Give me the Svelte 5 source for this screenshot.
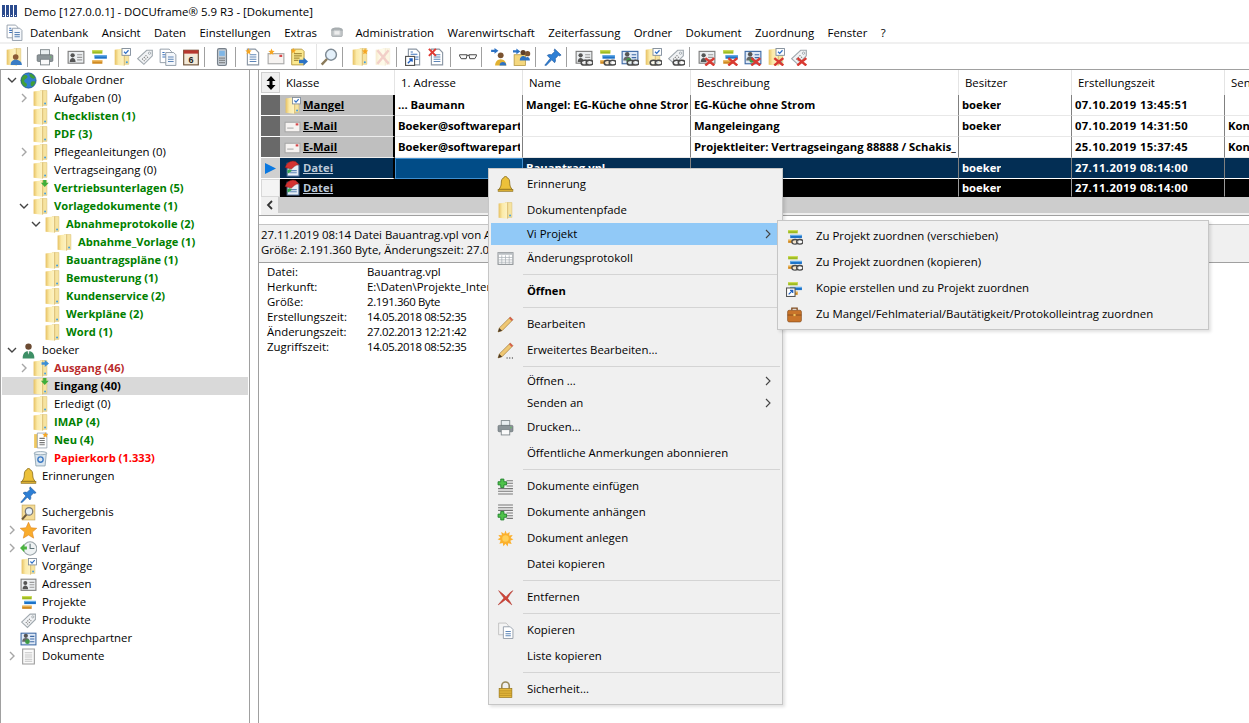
<script lang="ts">
  // Menüleiste
  const menus = [
    { label: 'Datenbank' }, { label: 'Ansicht' }, { label: 'Daten' }, { label: 'Einstellungen' }, { label: 'Extras' },
    { icon: 'fax' }, { label: 'Administration' }, { label: 'Warenwirtschaft' }, { label: 'Zeiterfassung' },
    { label: 'Ordner' }, { label: 'Dokument' }, { label: 'Zuordnung' }, { label: 'Fenster' }, { label: '?' }
  ];

  // Symbolleiste, '|' = Trenner, '||' = neuer Block
  const tools = [
    'userfolder', '|', 'printer', '|', 'idcard', 'project', 'foldercheck', 'tag', 'docs', 'calendar', '|', 'phone', '|',
    'docstar', 'mailstar', 'notearrow', '||', 'magnifier', '|', 'folderstar', 'folderx', '|', 'docshort', 'docx', '|',
    'glasses', '|', 'userarrow', 'usersarrow', '|', 'pin', '|',
    'idcard+link', 'project+link', 'contacts+link', 'foldercheck+link', 'tag+link', '|',
    'idcard+x', 'project+x', 'contacts+x', 'foldercheck+x', 'tag+x'
  ];

  // Baum: level, Icon, Text, Farbe, aufklappbar
  const tree = [
    { l: 0, i: 'globe', t: 'Globale Ordner', c: '', open: true },
    { l: 1, i: 'folder', t: 'Aufgaben (0)', c: '', more: true },
    { l: 1, i: 'folder', t: 'Checklisten (1)', c: 'green' },
    { l: 1, i: 'folder', t: 'PDF (3)', c: 'green' },
    { l: 1, i: 'folder', t: 'Pflegeanleitungen (0)', c: '', more: true },
    { l: 1, i: 'folder', t: 'Vertragseingang (0)', c: '' },
    { l: 1, i: 'folderin', t: 'Vertriebsunterlagen (5)', c: 'green' },
    { l: 1, i: 'folder', t: 'Vorlagedokumente (1)', c: 'green', open: true },
    { l: 2, i: 'folder', t: 'Abnahmeprotokolle (2)', c: 'green', open: true },
    { l: 3, i: 'folder', t: 'Abnahme_Vorlage (1)', c: 'green' },
    { l: 2, i: 'folder', t: 'Bauantragspläne (1)', c: 'green' },
    { l: 2, i: 'folder', t: 'Bemusterung (1)', c: 'green' },
    { l: 2, i: 'folder', t: 'Kundenservice (2)', c: 'green' },
    { l: 2, i: 'folder', t: 'Werkpläne (2)', c: 'green' },
    { l: 2, i: 'folder', t: 'Word (1)', c: 'green' },
    { l: 0, i: 'user', t: 'boeker', c: '', open: true },
    { l: 1, i: 'folderout', t: 'Ausgang (46)', c: 'darkred', more: true },
    { l: 1, i: 'folderin', t: 'Eingang (40)', c: 'strong', sel: true },
    { l: 1, i: 'folder', t: 'Erledigt (0)', c: '' },
    { l: 1, i: 'folder', t: 'IMAP (4)', c: 'green' },
    { l: 1, i: 'foldernew', t: 'Neu (4)', c: 'green' },
    { l: 1, i: 'trash', t: 'Papierkorb (1.333)', c: 'red' },
    { l: 0, i: 'bell', t: 'Erinnerungen', c: '' },
    { l: 0, i: 'pin', t: '', c: '' },
    { l: 0, i: 'searchfolder', t: 'Suchergebnis', c: '' },
    { l: 0, i: 'star', t: 'Favoriten', c: '', more: true },
    { l: 0, i: 'clock', t: 'Verlauf', c: '', more: true },
    { l: 0, i: 'foldercheck', t: 'Vorgänge', c: '' },
    { l: 0, i: 'idcard', t: 'Adressen', c: '' },
    { l: 0, i: 'project', t: 'Projekte', c: '' },
    { l: 0, i: 'tag', t: 'Produkte', c: '' },
    { l: 0, i: 'contacts', t: 'Ansprechpartner', c: '' },
    { l: 0, i: 'page', t: 'Dokumente', c: '', more: true }
  ];

  const columns = [
    { name: '1. Adresse', w: 128 },
    { name: 'Name', w: 168 },
    { name: 'Beschreibung', w: 268 },
    { name: 'Besitzer', w: 113 },
    { name: 'Erstellungszeit', w: 153 },
    { name: 'Sender', w: 40 }
  ];
  const DATE_COL = 4;

  const rows = [
    { kind: 'plain', icon: 'foldercheck', klasse: 'Mangel', cells: ['... Baumann', 'Mangel: EG-Küche ohne Strom', 'EG-Küche ohne Strom', 'boeker', '07.10.2019 13:45:51', ''] },
    { kind: 'plain', icon: 'mail', klasse: 'E-Mail', cells: ['Boeker@softwarepartner.de', '', 'Mangeleingang', 'boeker', '07.10.2019 14:31:50', 'Kontakt'] },
    { kind: 'plain', icon: 'mail', klasse: 'E-Mail', cells: ['Boeker@softwarepartner.de', '', 'Projektleiter: Vertragseingang 88888 / Schakis_', '', '25.10.2019 15:37:45', 'Kontakt'] },
    { kind: 'current', icon: 'datei', klasse: 'Datei', cells: ['', 'Bauantrag.vpl', '', 'boeker', '27.11.2019 08:14:00', ''] },
    { kind: 'marked', icon: 'datei', klasse: 'Datei', cells: ['', '', '', 'boeker', '27.11.2019 08:14:00', ''] }
  ];

  const details = [
    ['Datei:', 'Bauantrag.vpl'],
    ['Herkunft:', 'E:\\Daten\\Projekte_Intern\\Bauantrag'],
    ['Größe:', '2.191.360 Byte'],
    ['Erstellungszeit:', '14.05.2018 08:52:35'],
    ['Änderungszeit:', '27.02.2013 12:21:42'],
    ['Zugriffszeit:', '14.05.2018 08:52:35']
  ];

  // Kontextmenü, tall = 26px Zeile, sonst 22px
  const contextMenu = [
    { t: 'Erinnerung', i: 'bell', tall: true },
    { t: 'Dokumentenpfade', i: 'folder', tall: true },
    { t: 'Vi Projekt', sub: true, hot: true },
    { t: 'Änderungsprotokoll', i: 'table', tall: true },
    { sep: true },
    { t: 'Öffnen', tall: true, bold: true },
    { sep: true },
    { t: 'Bearbeiten', i: 'pencil', tall: true },
    { t: 'Erweitertes Bearbeiten...', i: 'pencildots', tall: true },
    { sep: true },
    { t: 'Öffnen ...', sub: true },
    { t: 'Senden an', sub: true },
    { t: 'Drucken...', i: 'printer', tall: true },
    { t: 'Öffentliche Anmerkungen abonnieren', tall: true },
    { sep: true },
    { t: 'Dokumente einfügen', i: 'plustop', tall: true },
    { t: 'Dokumente anhängen', i: 'plusbottom', tall: true },
    { t: 'Dokument anlegen', i: 'sun', tall: true },
    { t: 'Datei kopieren', tall: true },
    { sep: true },
    { t: 'Entfernen', i: 'redx', tall: true },
    { sep: true },
    { t: 'Kopieren', i: 'copy', tall: true },
    { t: 'Liste kopieren', tall: true },
    { sep: true },
    { t: 'Sicherheit...', i: 'lock', tall: true }
  ];

  const subMenu = [
    { t: 'Zu Projekt zuordnen (verschieben)', i: 'project+link' },
    { t: 'Zu Projekt zuordnen (kopieren)', i: 'project+link' },
    { t: 'Kopie erstellen und zu Projekt zuordnen', i: 'projectshort' },
    { t: 'Zu Mangel/Fehlmaterial/Bautätigkeit/Protokolleintrag zuordnen', i: 'case' }
  ];
</script>

{#snippet folderShape()}
  <path d="M8 .5h6v14H8z" fill="#f6e3a0" stroke="#dcc070" stroke-width=".5" />
  <path d="M1.500 1.500 10 .3v15.400L1.500 14.800z" fill="url(#folderGrad)" />
  <path d="M10 .3v15.400" stroke="#c9a650" stroke-width=".6" />
  <circle cx="12.300" cy="12.700" r=".9" fill="#3c9be2" />
{/snippet}

{#snippet projectShape()}
  <rect x="2" y="2" width="9" height="3" fill="#9dbb1f" />
  <rect x="2" y="2" width="9" height="1" fill="#d2e05a" />
  <rect x="4" y="6.500" width="11" height="3" fill="#1e73c8" />
  <rect x="4" y="6.500" width="11" height="1" fill="#66aeea" />
  <rect x="2" y="11" width="9" height="3" fill="#d18a22" />
  <rect x="2" y="11" width="9" height="1" fill="#f2c063" />
{/snippet}

{#snippet idcardShape()}
  <rect x="1" y="3" width="14" height="10.500" fill="#eceff1" stroke="#7d7d7d" />
  <circle cx="5" cy="6.500" r="1.900" fill="#555" />
  <path d="M2.400 12.500c0-2.600 1.200-3.600 2.600-3.600s2.600 1 2.600 3.600z" fill="#555" />
  <path d="M9 6h4.500M9 8.300h4.500M9 10.600h4.500" stroke="#9a9a9a" />
{/snippet}

{#snippet tagShape()}
  <path d="M1.500 9.500 9.500 2H14.500V7L7 14.500z" fill="#f1f3f5" stroke="#a0a8ae" />
  <circle cx="12" cy="4.600" r="1" fill="#fff" stroke="#8f989f" stroke-width=".7" />
  <path d="M5.500 9.500 8 12M7 8l2.500 2.500M8.500 6.500 11 9" stroke="#777" stroke-dasharray="1 1" />
{/snippet}

{#snippet contactsShape()}
  <rect x="1" y="3" width="14" height="11" fill="#dfe9f6" stroke="#3e6aa5" />
  <path d="M9.500 6h4M9.500 8.500h4M9.500 11h4" stroke="#3e6aa5" />
  <circle cx="5.500" cy="5.500" r="2" fill="#555" />
  <path d="M2 11c0-2.500 1.500-3.500 3.500-3.500S9 8.500 9 11z" fill="#666" />
  <circle cx="7" cy="11" r="2.200" fill="#3f9b45" />
{/snippet}

{#snippet docLines()}
  <path d="M3 1h7l3 3v11H3z" fill="#fff" stroke="#8b96a3" />
  <path d="M5 6h6M5 8h6M5 10h6M5 12h6" stroke="#5e86b8" />
{/snippet}

{#snippet overlay(kind: string)}
  {#if kind === 'link'}
    <g fill="#fff" fill-opacity=".75" stroke="#4a4a4a" stroke-width="1.300">
      <ellipse cx="8.500" cy="13" rx="3" ry="2.200" />
      <ellipse cx="13" cy="13" rx="3" ry="2.200" />
    </g>
  {:else if kind === 'x'}
    <path d="M6.500 9 14.500 15.500M14.500 9 6.500 15.500" stroke="#d93a32" stroke-width="2.200" />
  {/if}
{/snippet}

{#snippet icon(spec: string, size: number = 16)}
  {@const name = spec.split('+')[0]}
  <svg class="icon" width={size} height={size} viewBox="0 0 16 16" aria-hidden="true">
    {#if name === 'folder'}
      {@render folderShape()}
    {:else if name === 'folderin'}
      {@render folderShape()}
      <path d="M10.500 0h3v2.500h2.300L12 6.500 8.300 2.500h2.200z" fill="#3fae3a" />
    {:else if name === 'folderout'}
      {@render folderShape()}
      <path d="M9 2h3V0l4 3.200-4 3.300V4.500H9z" fill="#3c8fd6" />
    {:else if name === 'foldernew'}
      <rect x="2" y="2" width="4" height="13" fill="#efc860" />
      <path d="M5 1h9v14H5z" fill="#fff" stroke="#8b96a3" stroke-width=".7" />
      <path d="M7 6h5M7 8h5M7 10h5M7 12h5" stroke="#777" />
      <path d="M12.500 0l.8 1.800 1.900.2-1.400 1.300.4 1.900-1.700-1-1.700 1 .4-1.900L9.800 2l1.900-.2z" fill="#f5a623" />
    {:else if name === 'foldercheck'}
      {@render folderShape()}
      <rect x="8" y=".5" width="7.500" height="6" fill="#fff" stroke="#7d8a99" stroke-width=".8" />
      <path d="M9.800 3.300 11.300 4.800 13.800 2" fill="none" stroke="#2f6fc4" stroke-width="1.100" />
    {:else if name === 'folderstar'}
      {@render folderShape()}
      <path d="M12.500 0l.8 2 2 .2-1.500 1.400.4 2-1.700-1-1.700 1 .4-2L9.700 2.200l2-.2z" fill="#f5a623" />
    {:else if name === 'folderx'}
      <g opacity=".3">
        {@render folderShape()}
      </g>
      <path d="M3 2 13 14M13 2 3 14" stroke="#f2cfc8" stroke-width="2.200" />
    {:else if name === 'userfolder'}
      {@render folderShape()}
      <circle cx="9.500" cy="8" r="2.500" fill="#8a5a34" />
      <path d="M5 15c0-3 2-4.500 4.500-4.500S15 12 15 15z" fill="#3a7cc4" />
    {:else if name === 'globe'}
      <circle cx="8" cy="8" r="7.200" fill="#2f7fd0" />
      <path d="M4 2.500c2 0 3.500 1 3 2.500S4 6.500 4 8.500s2.500 1.500 2.500 3.500S5 14 5 14C2 12.500.8 10 .8 8S2 3.500 4 2.500zM9 1.500c2 0 4.500 1.500 5.300 4C13 7 11 6 10 5S8.500 3 9 1.500zM11 9c1.500-.5 3.500-.5 3.500.5S12.500 14 11 13.500 10 9.500 11 9z" fill="#3f9f3a" />
      <circle cx="8" cy="8" r="7.200" fill="none" stroke="#1d4f8c" stroke-width=".6" />
    {:else if name === 'user'}
      <circle cx="8" cy="4.300" r="3" fill="#6b4a32" />
      <path d="M2.500 15.500c0-5 2.500-7 5.500-7s5.500 2 5.500 7z" fill="#3d8f66" />
      <path d="M7 8.500h2L8 12z" fill="#e9e9e9" />
    {:else if name === 'bell'}
      <path d="M8 .3c.8 0 1.200.5 1.200 1.100 2 .6 2.800 2.400 2.800 5.300 0 2.700 1 4.400 2.200 5.800H1.800C3 11.100 4 9.400 4 6.700c0-2.900.8-4.700 2.800-5.300C6.800.8 7.200.3 8 .3z" fill="#ecc13a" stroke="#7f6212" stroke-width=".7" />
      <rect x="1" y="12.500" width="14" height="2" fill="#d8ad33" stroke="#7f6212" stroke-width=".5" />
    {:else if name === 'pin'}
      <path d="M9.500.8 15.200 6.300 13.800 7 12.800 6.500 10 9.500c.5 1.500.2 2.800-.6 3.600L6.900 10.500 2 15.500.7 15.300 5.500 9.300 2.900 6.600C3.800 5.800 5 5.500 6.500 6l3-2.800-.5-1z" fill="#2d7fd5" stroke="#1a5296" stroke-width=".5" />
    {:else if name === 'searchfolder'}
      <rect x="2" y="1" width="12" height="14" fill="#f5dc96" stroke="#c9a95a" stroke-width=".7" />
      <circle cx="8.500" cy="7" r="3.500" fill="#e6f0f8" stroke="#7a7a7a" stroke-width="1.200" />
      <path d="M6 10 2 14.500" stroke="#6e5a3a" stroke-width="2" />
    {:else if name === 'star'}
      <path d="M8 .2l2.300 5.200 5.500.5-4.200 3.600 1.300 5.700L8 12.300 3.100 15.200l1.300-5.700L.2 5.900l5.500-.5z" fill="#f9ac2c" stroke="#d97b14" stroke-width=".5" />
    {:else if name === 'clock'}
      <circle cx="9.500" cy="8" r="6.300" fill="#eef2f3" stroke="#9aa4a8" />
      <path d="M9.500 3.500V8h4" fill="none" stroke="#5f7378" />
      <path d="M0 7.500 4 3.500v2.500h2.500v3H4v2.500z" fill="#4ab33f" />
    {:else if name === 'idcard'}
      {@render idcardShape()}
    {:else if name === 'project'}
      {@render projectShape()}
    {:else if name === 'projectshort'}
      {@render projectShape()}
      <rect x=".5" y="7.500" width="8" height="8" fill="#fff" stroke="#555" />
      <path d="M2.500 13.500 6 10M3.800 9.800H6.300V12.300" fill="none" stroke="#1e5fc0" stroke-width="1.200" />
    {:else if name === 'tag'}
      {@render tagShape()}
    {:else if name === 'contacts'}
      {@render contactsShape()}
    {:else if name === 'page'}
      <path d="M2.500 1h11v14h-11z" fill="#fbfbfb" stroke="#9a9a9a" />
      <path d="M4.500 4.500h7M4.500 6.500h7M4.500 8.500h7M4.500 10.500h7M4.500 12.500h7" stroke="#c4c4c4" />
    {:else if name === 'mail'}
      <rect x="1" y="4" width="14" height="9" fill="#f6f3f1" stroke="#a8a8a8" />
      <rect x="11" y="5" width="2.500" height="2" fill="#d7484a" />
      <path d="M3 9.500h6" stroke="#a8a8a8" />
    {:else if name === 'mailstar'}
      <rect x="1" y="5" width="14" height="9" fill="#f6f3f1" stroke="#a8a8a8" />
      <rect x="11" y="6" width="2.500" height="2" fill="#d7484a" />
      <path d="M4 .5l.8 2 2 .2-1.500 1.400.4 2-1.700-1-1.700 1 .4-2L1.200 2.700l2-.2z" fill="#f5a623" />
    {:else if name === 'datei'}
      <path d="M3 3h9l2 2v10H3z" fill="#e6edf5" stroke="#5a7ba6" />
      <path d="M5 10h7M5 12h7" stroke="#5e86b8" />
      <path d="M1 7c2-5 6-7 10-5.500l3 3c-3 0-5 2-7 4z" fill="#d33232" stroke="#7f1d1d" stroke-width=".5" />
      <path d="M3 10c2-2 4-1.500 4 .5L3.500 13z" fill="#3aa655" />
    {:else if name === 'trash'}
      <path d="M2.500 3h11l-1.200 12h-8.600z" fill="#dbe6ee" stroke="#8aa0b0" stroke-width=".8" />
      <ellipse cx="8" cy="3" rx="6" ry="1.500" fill="#eef3f6" stroke="#8aa0b0" stroke-width=".8" />
      <circle cx="8" cy="9" r="2.500" fill="none" stroke="#3b79c4" stroke-width="1.300" />
    {:else if name === 'printer'}
      <rect x="4" y="1.500" width="8" height="5" fill="#e8eef0" stroke="#7b8488" stroke-width=".8" />
      <rect x="1" y="6" width="14" height="6" rx="1" fill="#8b9498" stroke="#5f686c" stroke-width=".6" />
      <rect x="4" y="10" width="8" height="5" fill="#fafafa" stroke="#7b8488" stroke-width=".8" />
      <circle cx="13" cy="8" r=".7" fill="#5fc35a" />
    {:else if name === 'calendar'}
      <rect x="1.500" y="2" width="13" height="13" fill="#f3e9d8" stroke="#6b4f35" />
      <rect x="1.500" y="2" width="13" height="3" fill="#b7372f" />
      <text x="8" y="13" font-size="8" font-weight="700" text-anchor="middle" fill="#222" font-family="Liberation Sans, sans-serif">6</text>
    {:else if name === 'phone'}
      <rect x="4" y=".5" width="8" height="15" rx="1.500" fill="#c5ccd3" stroke="#77808a" />
      <rect x="5.500" y="2.500" width="5" height="4.500" fill="#7fb6e6" />
      <path d="M5.700 9h1M7.500 9h1M9.300 9h1M5.700 11h1M7.500 11h1M9.300 11h1M5.700 13h1M7.500 13h1M9.300 13h1" stroke="#555" />
    {:else if name === 'docs'}
      <path d="M1 1h8l2 2v10H1z" fill="#fff" stroke="#8b96a3" stroke-width=".8" />
      <path d="M3 4h2M3 6h5M3 8h5" stroke="#3f74bc" />
      <path d="M6 4h7l2 2v9.500H6z" fill="#f4f7fb" stroke="#8b96a3" stroke-width=".8" />
      <path d="M8 8h5M8 10h5M8 12h5" stroke="#5e86b8" />
    {:else if name === 'docstar'}
      {@render docLines()}
      <path d="M4 0l.8 2 2 .2-1.500 1.400.4 2-1.700-1-1.700 1 .4-2L1.200 2.200l2-.2z" fill="#f5a623" />
    {:else if name === 'notearrow'}
      <path d="M1.500 1h9l2 2v12h-11z" fill="#fbe98f" stroke="#b4963e" stroke-width=".8" />
      <path d="M3.500 5h7M3.500 7h7M3.500 9h5M3.500 11h4" stroke="#a88f3e" />
      <path d="M8 10.500h4V8.500l4 3.500-4 3.500v-2H8z" fill="#2c72c4" />
      <path d="M3 0l.7 1.600 1.700.2-1.300 1.100.4 1.700L3 3.700l-1.500.9.400-1.700L.6 1.800l1.700-.2z" fill="#f5a623" />
    {:else if name === 'magnifier'}
      <circle cx="9.800" cy="6" r="4.800" fill="#e4f0fa" stroke="#7f8b95" stroke-width="1.300" />
      <path d="M6.200 9.800 1.500 14.800" stroke="#8a7a5a" stroke-width="2.200" />
    {:else if name === 'docshort'}
      <path d="M3 1h7l3 3v11H3z" fill="#fff" stroke="#8b96a3" />
      <path d="M5 3.500h2M5 5.500h6M9 8h3M9 10h3" stroke="#3f74bc" />
      <rect x=".5" y="7.500" width="8" height="8" fill="#fff" stroke="#555" />
      <path d="M2.500 13.500 6 10M3.800 9.800H6.300V12.300" fill="none" stroke="#1e5fc0" stroke-width="1.200" />
    {:else if name === 'docx'}
      {@render docLines()}
      <path d="M.8 .8 7 7M7 .8.8 7" stroke="#e13a32" stroke-width="1.800" />
    {:else if name === 'glasses'}
      <path d="M.5 6h6.500v1l-.6 2.500H2L.5 7zM9 7V6h6.500V7L14 9.500H9.600z" fill="#fafafa" stroke="#333" stroke-width=".8" />
      <path d="M7 6.500h2" stroke="#333" stroke-width=".8" />
    {:else if name === 'userarrow'}
      <path d="M1 1.500h3V0l3.500 2.500L4 5V3.500H1z" fill="#2c72c4" />
      <circle cx="9.500" cy="6.500" r="2.600" fill="#7a5230" />
      <path d="M4.500 15.500c0-3 2.200-5.500 5-5.500s5 2.500 5 5.500z" fill="#e2b232" />
      <path d="M8.500 15.500c0-2 1.500-3 3-3s3 1 3 3z" fill="#2c72c4" />
    {:else if name === 'usersarrow'}
      <rect x="1" y="6" width="10" height="9.500" fill="#f4d77e" stroke="#b4963e" stroke-width=".7" />
      <path d="M0 2h3V.5L6.500 3 3 5.500V4H0z" fill="#2c72c4" />
      <circle cx="9" cy="4" r="2.300" fill="#5f3f28" />
      <circle cx="13" cy="5" r="2.300" fill="#7a5230" />
      <path d="M6 11c0-2.500 1.500-4 3-4 1 0 2 .6 2.500 1.500 1-1 3.500-.5 3.500 2.500z" fill="#2c72c4" />
    {:else if name === 'fax'}
      <rect x="2" y="5" width="12" height="8" rx="1" fill="#c6cacc" stroke="#8a8f92" stroke-width=".7" />
      <path d="M1.500 5c1-3 12-3 13 0v1.500h-3V5h-7v1.500h-3z" fill="#a7adb0" />
      <rect x="5" y="7" width="6" height="4" fill="#eee" />
    {:else if name === 'table'}
      <rect x="1" y="2.500" width="14" height="11" fill="#fff" stroke="#8a8f92" />
      <rect x="1" y="2.500" width="14" height="2" fill="#b9bec2" />
      <path d="M1 7h14M1 9.300h14M1 11.500h14M4.500 5v8M8 5v8M11.500 5v8" stroke="#a8b0b5" stroke-width=".7" />
    {:else if name === 'pencil' || name === 'pencildots'}
      <path d="M1 15 2.200 11.200 12.500 1 15 3.500 4.800 13.800z" fill="#efc772" stroke="#9a7434" stroke-width=".6" />
      <path d="M12.500 1 15 3.500 13.800 4.700 11.300 2.200z" fill="#d75d4e" />
      <path d="M1 15 2.200 11.200 4.800 13.800z" fill="#4a3a28" />
      {#if name === 'pencildots'}
        <path d="M9 15h1M11.500 15h1M14 15h1" stroke="#222" />
      {/if}
    {:else if name === 'plustop' || name === 'plusbottom'}
      {#if name === 'plustop'}
        <path d="M9 2.500h6M9 5h6M9 7.500h6M1 10h14M1 12.500h14M1 15h14" stroke="#777" />
        <path d="M3.500 1h3v2.500H9v3H6.500V9h-3V6.500H1v-3h2.500z" fill="#4fc24a" stroke="#1e7d2a" stroke-width=".8" />
      {:else}
        <path d="M1 1h14M1 3.500h14M1 6h14M9 8.500h6M9 11h6M9 13.500h6" stroke="#777" />
        <path d="M3.500 7h3v2.500H9v3H6.500V15h-3v-2.500H1v-3h2.500z" fill="#4fc24a" stroke="#1e7d2a" stroke-width=".8" />
      {/if}
    {:else if name === 'sun'}
      <path d="M8 .5l1.200 3.100L12 1.800l-.6 3.300 3.400-.3-2 2.700 2.700 1.300-3 1.300 1.300 3-3.200-.7-.6 3.100L8 12.900l-2 2.400-.6-3.100-3.200.7 1.300-3-3-1.300L3.200 7.300l-2-2.700 3.400.3L4 1.800l2.800 1.800z" fill="#fbb02d" />
      <circle cx="8" cy="8" r="3" fill="#ffcf57" />
    {:else if name === 'redx'}
      <path d="M1.500 1.500C5 4 7 6 8.500 7.500 10.500 5 12.500 3 15 1.500 13 4 11.300 6.500 10 8.800 11.500 10.800 13 13 14 15 11.500 13 9.500 11.300 8 10 5.500 12 3 14 1 15 3 12.500 5 10.500 6.500 8.500 4.500 6 3 4 1.500 1.500z" fill="#cf4438" stroke="#a93228" stroke-width=".4" />
    {:else if name === 'copy'}
      <path d="M1.500 1h7l2 2v9h-9z" fill="#f4f4f4" stroke="#bdbdbd" stroke-width=".8" />
      <path d="M6 4.500h6.500l2.500 2.500v8.500H6z" fill="#fff" stroke="#8b96a3" stroke-width=".8" />
      <path d="M8 9h5M8 11h5M8 13h5" stroke="#5e86b8" />
    {:else if name === 'lock'}
      <path d="M4.500 7V4.500a3.500 3.500 0 0 1 7 0V7" fill="none" stroke="#9a8a5a" stroke-width="1.500" />
      <rect x="2" y="7" width="12" height="8.500" fill="#e4b73c" stroke="#8d6d13" stroke-width=".6" />
      <path d="M2 9.300h12M2 11.500h12M2 13.500h12" stroke="#b48a1f" stroke-width=".7" />
    {:else if name === 'case'}
      <path d="M5.500 4V2h5v2" fill="none" stroke="#7f4a1c" stroke-width="1.200" />
      <rect x="1.500" y="4" width="13" height="11" rx="1.500" fill="#c9742a" stroke="#7f4a1c" stroke-width=".6" />
      <path d="M1.500 8.500h13" stroke="#8f5220" />
      <rect x="7" y="7.500" width="2" height="2" fill="#f0c35a" />
    {/if}
    {#if spec.includes('+')}
      {@render overlay(spec.split('+')[1])}
    {/if}
  </svg>
{/snippet}

{#snippet chevron(open: boolean)}
  <svg class="chev" width="10" height="10" viewBox="0 0 10 10" aria-hidden="true">
    {#if open}
      <path d="M1 3 5 7 9 3" fill="none" stroke="#444" stroke-width="1.400" />
    {:else}
      <path d="M3 1 7 5 3 9" fill="none" stroke="#a6a6a6" stroke-width="1.400" />
    {/if}
  </svg>
{/snippet}

<svg class="defs" width="0" height="0" aria-hidden="true">
  <defs>
    <linearGradient id="folderGrad" x1="0" x2="1" y1="0" y2="0">
      <stop offset="0" stop-color="#e6c060" />
      <stop offset=".4" stop-color="#fbeaa8" />
      <stop offset="1" stop-color="#fdf3c6" />
    </linearGradient>
  </defs>
</svg>

<div class="window">
  <header class="titlebar">
    <svg class="app-logo" width="16" height="12" viewBox="0 0 16 12" aria-hidden="true">
      <path d="M0 0h3v12H0zM4 0h3v12H4zM8 0h3v12H8zM12 0h3v12h-3z" fill="#2b4b8e" />
      <path d="M1 10h1v1H1zM5 10h1v1H5zM9 10h1v1H9zM13 10h1v1h-1z" fill="#fff" />
    </svg>
    <span>Demo [127.0.0.1] - DOCUframe® 5.9 R3 - [Dokumente]</span>
  </header>

  <nav class="menubar">
    <span class="doc-icon">{@render icon('docs', 17)}</span>
    {#each menus as m}
      {#if m.icon}
        <span class="menu-icon">{@render icon(m.icon, 14)}</span>
      {:else}
        <span class="menu-label">{m.label}</span>
      {/if}
    {/each}
  </nav>

  <div class="toolbar">
    {#each tools as t}
      {#if t === '|'}
        <span class="tool-sep"></span>
      {:else if t === '||'}
        <span class="tool-break"></span>
      {:else}
        <span class="tool">{@render icon(t, 18)}</span>
      {/if}
    {/each}
  </div>

  <main class="body">
    <aside class="tree">
      {#each tree as n}
        <div class="tree-row {n.c}" class:sel={n.sel} style="padding-left: {4 + n.l * 12}px">
          <span class="chev-slot">
            {#if n.open}
              {@render chevron(true)}
            {:else if n.more}
              {@render chevron(false)}
            {/if}
          </span>
          <span class="tree-icon">{@render icon(n.i, 17)}</span>
          <span class="tree-text">{n.t}</span>
        </div>
      {/each}
    </aside>

    <section class="content">
      <div class="grid">
        <div class="grid-head">
          <div class="corner">
            <svg width="10" height="14" viewBox="0 0 10 14" aria-hidden="true">
              <path d="M5 0 9.500 5H6.500V9H9.500L5 14 .5 9H3.500V5H.5z" fill="#000" />
            </svg>
          </div>
          <div class="head-cell first">Klasse</div>
          {#each columns as c}
            <div class="head-cell" style="width: {c.w}px">{c.name}</div>
          {/each}
        </div>

        {#each rows as r}
          <div class="grid-row {r.kind}">
            <div class="row-head">
              {#if r.kind === 'current'}
                <svg width="11" height="11" viewBox="0 0 11 11" aria-hidden="true"><path d="M0 0 11 5.500 0 11z" fill="#0a78e0" /></svg>
              {/if}
            </div>
            <div class="klasse">
              {@render icon(r.icon, 17)}
              <span>{r.klasse}</span>
            </div>
            {#each columns as c, i}
              <div class="cell" class:focus={r.kind === 'current' && i === 0} class:date={i === DATE_COL} style="width: {c.w}px"><span>{r.cells[i]}</span></div>
            {/each}
          </div>
        {/each}

        <div class="hscroll">
          <div class="scroll-btn">
            <svg width="8" height="10" viewBox="0 0 8 10" aria-hidden="true"><path d="M6 1 2 5 6 9" fill="none" stroke="#333" stroke-width="1.800" /></svg>
          </div>
        </div>
      </div>

      <div class="summary">
        <div>27.11.2019 08:14 Datei Bauantrag.vpl von Andreas Boeker</div>
        <div>Größe: 2.191.360 Byte, Änderungszeit: 27.02.2013 12:21:42</div>
      </div>

      <div class="details">
        {#each details as d, i}
          <span>{d[0]}</span><span class:num={i >= 2}>{d[1]}</span>
        {/each}
      </div>
    </section>
  </main>

  <div class="ctx main-ctx">
    {#each contextMenu as item}
      {#if item.sep}
        <div class="ctx-sep"></div>
      {:else}
        <div class="ctx-item" class:tall={item.tall} class:hot={item.hot} class:bold={item.bold}>
          <span class="ctx-icon">
            {#if item.i}{@render icon(item.i, 17)}{/if}
          </span>
          <span class="ctx-text">{item.t}</span>
          {#if item.sub}
            <svg class="ctx-arrow" width="6" height="10" viewBox="0 0 6 10" aria-hidden="true"><path d="M1 1 5 5 1 9" fill="none" stroke="#444" stroke-width="1.100" /></svg>
          {/if}
        </div>
      {/if}
    {/each}
  </div>

  <div class="ctx sub-ctx">
    {#each subMenu as item}
      <div class="ctx-item tall">
        <span class="ctx-icon">{@render icon(item.i, 17)}</span>
        <span class="ctx-text">{item.t}</span>
      </div>
    {/each}
  </div>
</div>

<style>
  :global(body) {
    margin: 0;
    background: #fff;
  }

  .defs {
    display: block;
    width: 0;
    height: 0;
  }

  .window {
    position: relative;
    width: 1249px;
    height: 723px;
    overflow: hidden;
    display: flex;
    flex-direction: column;
    font-family: "Open Sans", "Noto Sans", sans-serif;
    font-size: 11.4px;
    color: #000;
    background: #fff;
  }

  .icon {
    display: block;
    flex: none;
  }

  .titlebar {
    height: 22px;
    flex: none;
    display: flex;
    align-items: center;
    gap: 6px;
    padding-left: 2px;
  }

  .menubar {
    height: 20px;
    flex: none;
    display: flex;
    align-items: center;
    border-bottom: 2px solid #f0f0f0;
  }

  .doc-icon {
    margin: 0 0 0 6px;
    width: 24px;
  }

  .menu-label {
    padding: 0 6.7px;
    white-space: nowrap;
  }

  .menu-label:nth-child(2) {
    padding-left: 0;
  }

  .menu-icon {
    padding: 0 5px 0 6px;
  }

  .toolbar {
    height: 25px;
    flex: none;
    display: flex;
    align-items: center;
    padding-left: 2px;
    border-bottom: 1px solid #a0a0a0;
  }

  .tool {
    width: 23px;
    display: flex;
    justify-content: center;
  }

  .tool-sep {
    width: 1px;
    height: 20px;
    margin: 0 5px 0 2px;
    background: #a0a0a0;
  }

  .tool-break {
    width: 1px;
    height: 25px;
    margin: 0 0 0 6px;
    background: #e4e4e4;
  }

  .body {
    flex: 1;
    display: flex;
    min-height: 0;
  }

  .tree {
    width: 250px;
    flex: none;
    box-sizing: border-box;
    padding: 1px 1px 0;
    border-left: 1px solid #a0a0a0;
    border-right: 1px solid #a0a0a0;
  }

  .tree-row {
    height: 18px;
    display: flex;
    align-items: center;
    white-space: nowrap;
  }

  .tree-row.sel {
    background: #d9d9d9;
  }

  .tree-row.green,
  .tree-row.darkred,
  .tree-row.red,
  .tree-row.strong {
    font-weight: 700;
    font-size: 11.15px;
  }

  .tree-row.green {
    color: #008000;
  }

  .tree-row.darkred {
    color: #b92b2b;
  }

  .tree-row.red {
    color: #ff0000;
  }

  .tree-text {
    padding-bottom: 2px;
  }

  .chev-slot {
    width: 12px;
    flex: none;
    display: flex;
    justify-content: center;
  }

  .tree-icon {
    width: 24px;
    flex: none;
    padding-left: 2px;
    box-sizing: border-box;
  }

  .content {
    flex: 1;
    min-width: 0;
    margin-left: 8px;
    display: flex;
    flex-direction: column;
    border-left: 1px solid #a0a0a0;
  }

  .grid {
    height: 146px;
    flex: none;
    box-sizing: border-box;
    border-bottom: 1px solid #a0a0a0;
    overflow: hidden;
    padding-left: 2px;
  }

  .grid-head {
    height: 25px;
    display: flex;
    align-items: stretch;
  }

  .corner {
    width: 19px;
    height: 21px;
    margin-top: 2px;
    flex: none;
    box-sizing: border-box;
    display: flex;
    align-items: center;
    justify-content: center;
    background: #f0f0f0;
    border: 1px solid #cfcfcf;
  }

  .head-cell {
    flex: none;
    box-sizing: border-box;
    padding-left: 6px;
    line-height: 26px;
    border-right: 1px solid #e4e4e4;
    white-space: nowrap;
    overflow: hidden;
  }

  .head-cell.first {
    width: 115px;
  }

  .grid-row {
    height: 21px;
    display: flex;
    font-weight: 700;
    font-size: 11.25px;
    white-space: nowrap;
  }

  .grid-row.marked {
    height: 18px;
  }

  .row-head {
    width: 19px;
    flex: none;
    box-sizing: border-box;
    background: #696969;
    border-bottom: 1px solid #fff;
    display: flex;
    align-items: center;
    justify-content: center;
  }

  .klasse {
    width: 115px;
    flex: none;
    box-sizing: border-box;
    display: flex;
    align-items: center;
    gap: 2px;
    padding-left: 4px;
    background: #bfbfbf;
    border-bottom: 1px solid #eee;
    border-right: 2px solid #000;
  }

  .klasse span {
    text-decoration: underline;
    padding-bottom: 2px;
  }

  .cell {
    flex: none;
    box-sizing: border-box;
    display: flex;
    align-items: center;
    padding: 0 2px 2px 3px;
    overflow: hidden;
    border-right: 1px solid #808080;
    border-bottom: 1px solid #e8e8e8;
  }

  .cell span {
    overflow: hidden;
  }

  .cell.date {
    letter-spacing: 0.38px;
  }

  .grid-row.current .row-head {
    background: #d0d0d0;
  }

  .grid-row.current .klasse,
  .grid-row.current .cell {
    background: #032e54;
    color: #fff;
    border-bottom-color: #fff;
  }

  .grid-row.current .klasse span,
  .grid-row.marked .klasse span {
    color: #bcc9d8;
  }

  .grid-row.current .cell.focus {
    background: #014c87;
    border: 1px solid #3f8fd0;
  }

  .grid-row.marked .row-head {
    background: #f4f4f4;
    border: 1px solid #d8d8d8;
  }

  .grid-row.marked .klasse,
  .grid-row.marked .cell {
    background: #000;
    color: #fff;
    border-bottom-color: #000;
  }

  .grid-row.marked .cell {
    padding-bottom: 0;
    border-right-color: #9a9a9a;
  }

  .grid-row.marked .klasse span {
    padding-bottom: 0;
  }

  .hscroll {
    height: 16px;
    background: #cdcdcd;
    display: flex;
    border-bottom: 2px solid #f0f0f0;
  }

  .scroll-btn {
    width: 17px;
    background: #f0f0f0;
    display: flex;
    align-items: center;
    justify-content: center;
  }

  .summary {
    margin-top: 8px;
    height: 39px;
    flex: none;
    box-sizing: border-box;
    padding: 2px 0 0 2px;
    line-height: 15px;
    background: #f0f0f0;
    border-top: 1px solid #c4c4c4;
    border-bottom: 1px solid #a0a0a0;
    white-space: nowrap;
  }

  .details {
    padding: 1px 0 0 8px;
    display: grid;
    grid-template-columns: 100px 1fr;
    line-height: 15px;
  }

  .details .num {
    letter-spacing: -0.35px;
  }

  .ctx {
    position: absolute;
    box-sizing: border-box;
    background: #f0f0f0;
    border: 1px solid #c6c6c6;
    padding: 2px;
    box-shadow: 2px 2px 3px rgba(0, 0, 0, 0.12);
  }

  .main-ctx {
    left: 488px;
    top: 168px;
    width: 295px;
    height: 537px;
  }

  .sub-ctx {
    left: 777px;
    top: 220px;
    width: 432px;
    height: 110px;
  }

  .ctx-item {
    height: 22px;
    display: flex;
    align-items: center;
    position: relative;
    white-space: nowrap;
  }

  .ctx-item.tall {
    height: 26px;
  }

  .ctx-item.hot {
    background: #91c9f7;
    margin-right: 3px;
  }

  .ctx-item.bold {
    font-weight: 700;
    font-size: 11.15px;
  }

  .ctx-icon {
    width: 36px;
    flex: none;
    padding-left: 6px;
    box-sizing: border-box;
  }

  .ctx-text {
    padding-bottom: 2px;
  }

  .ctx-arrow {
    position: absolute;
    right: 6px;
    top: 6px;
  }

  .main-ctx .ctx-item:not(.hot) .ctx-arrow {
    right: 9px;
  }

  .ctx-sep {
    height: 1px;
    margin: 3px 0 3px 32px;
    background: #d4d4d4;
  }
</style>
